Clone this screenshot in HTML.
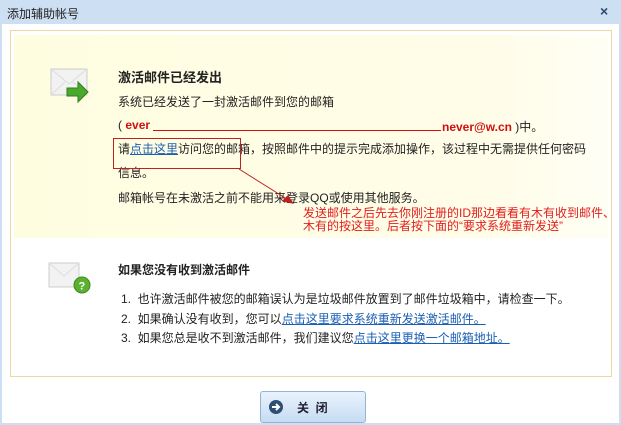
<!DOCTYPE html>
<html><head><meta charset="utf-8"><style>
*{margin:0;padding:0;box-sizing:border-box}
body{width:621px;height:425px;overflow:hidden;background:#fff;font-family:"Liberation Sans","Noto Sans CJK SC",sans-serif;font-size:12px;color:#222;position:relative}
.a{position:absolute;white-space:nowrap}
a{color:#1a5fb4;text-decoration:underline}
</style></head><body>
<div class="a" style="left:0;top:0;width:621px;height:24px;background:#cddff2"></div>
<div class="a" style="left:0;top:24px;width:621px;height:401px;border-left:2px solid #cddff2;border-right:2px solid #cddff2;border-bottom:2px solid #cddff2"></div>
<div class="a" style="left:7px;top:5px;font-size:12px;color:#222">添加辅助帐号</div>
<div class="a" style="left:600px;top:3px;font-size:14px;font-weight:bold;color:#2b4a6b">×</div>
<div class="a" style="left:10px;top:30px;width:602px;height:347px;border:1px solid #efd7a3;background:#fff"></div>
<div class="a" style="left:14px;top:35px;width:594px;height:203px;background:linear-gradient(90deg,#fffde0,#fffde8 80%,#fffef4)"></div>
<!-- envelope 1 -->
<svg class="a" style="left:50px;top:68px" width="42" height="38"><rect x="1" y="1" width="36" height="26" fill="#f2f2f2" stroke="#ccc"/><path d="M1 1 L19 16 L37 1 M1 27 L15 14 M37 27 L23 14" fill="none" stroke="#ddd"/><path d="M17 20 h11 v-6 l10 10 l-10 10 v-6 h-11z" fill="#4aa82a" stroke="#2f7f1a"/></svg>
<div class="a" style="left:118px;top:67px;font-size:13px;font-weight:bold">激活邮件已经发出</div>
<div class="a" style="left:118px;top:93px">系统已经发送了一封激活邮件到您的邮箱</div>
<div class="a" style="left:118px;top:118px">( <b style="color:#d01010">ever</b></div>
<div class="a" style="left:153px;top:130px;width:288px;height:1px;background:#d01010"></div>
<div class="a" style="left:442px;top:118px"><b style="color:#d01010">never@w.cn</b> )中。</div>
<div class="a" style="left:118px;top:140px">请<a href="#">点击这里</a>访问您的邮箱，按照邮件中的提示完成添加操作，该过程中无需提供任何密码</div>
<div class="a" style="left:118px;top:164px">信息。</div>
<div class="a" style="left:118px;top:189px">邮箱帐号在未激活之前不能用来登录QQ或使用其他服务。</div>
<div class="a" style="left:113px;top:138px;width:128px;height:31px;border:1px solid #c02020"></div>
<svg class="a" style="left:238px;top:168px" width="60" height="40"><path d="M1 1 L52 33" stroke="#c02020" stroke-width="1"/><path d="M56 36 L44 33 L50 27z" fill="#c02020"/></svg>
<div class="a" style="left:303px;top:207px;color:#e02020;line-height:13px">发送邮件之后先去你刚注册的ID那边看看有木有收到邮件、<br>木有的按这里。后者按下面的“要求系统重新发送”</div>
<!-- envelope 2 -->
<svg class="a" style="left:48px;top:262px" width="46" height="34"><rect x="1" y="1" width="30" height="24" fill="#f2f2f2" stroke="#ccc"/><path d="M1 1 L16 14 L31 1" fill="none" stroke="#ddd"/><circle cx="34" cy="23" r="8" fill="#5cb030" stroke="#3d8a1e"/><text x="30.5" y="27.5" font-size="11" font-weight="bold" fill="#fff" font-family="Liberation Sans">?</text></svg>
<div class="a" style="left:118px;top:261px;font-weight:bold">如果您没有收到激活邮件</div>
<div class="a" style="left:121px;top:290px">1. &nbsp;也许激活邮件被您的邮箱误认为是垃圾邮件放置到了邮件垃圾箱中，请检查一下。</div>
<div class="a" style="left:121px;top:310px">2. &nbsp;如果确认没有收到，您可以<a href="#">点击这里要求系统重新发送激活邮件。</a></div>
<div class="a" style="left:121px;top:329px">3. &nbsp;如果您总是收不到激活邮件，我们建议您<a href="#">点击这里更换一个邮箱地址。</a></div>
<div class="a" style="left:260px;top:391px;width:106px;height:32px;border:1px solid #93b4d8;border-radius:3px;background:linear-gradient(#eaf3fc,#c6dcf3)"></div>
<svg class="a" style="left:268px;top:399px" width="16" height="16"><circle cx="8" cy="8" r="7" fill="#2e4f74"/><path d="M4 8h6M8 5l3 3-3 3" stroke="#fff" stroke-width="2" fill="none"/></svg>
<div class="a" style="left:297px;top:399px;font-weight:bold;color:#223">关 &nbsp;闭</div>
</body></html>
